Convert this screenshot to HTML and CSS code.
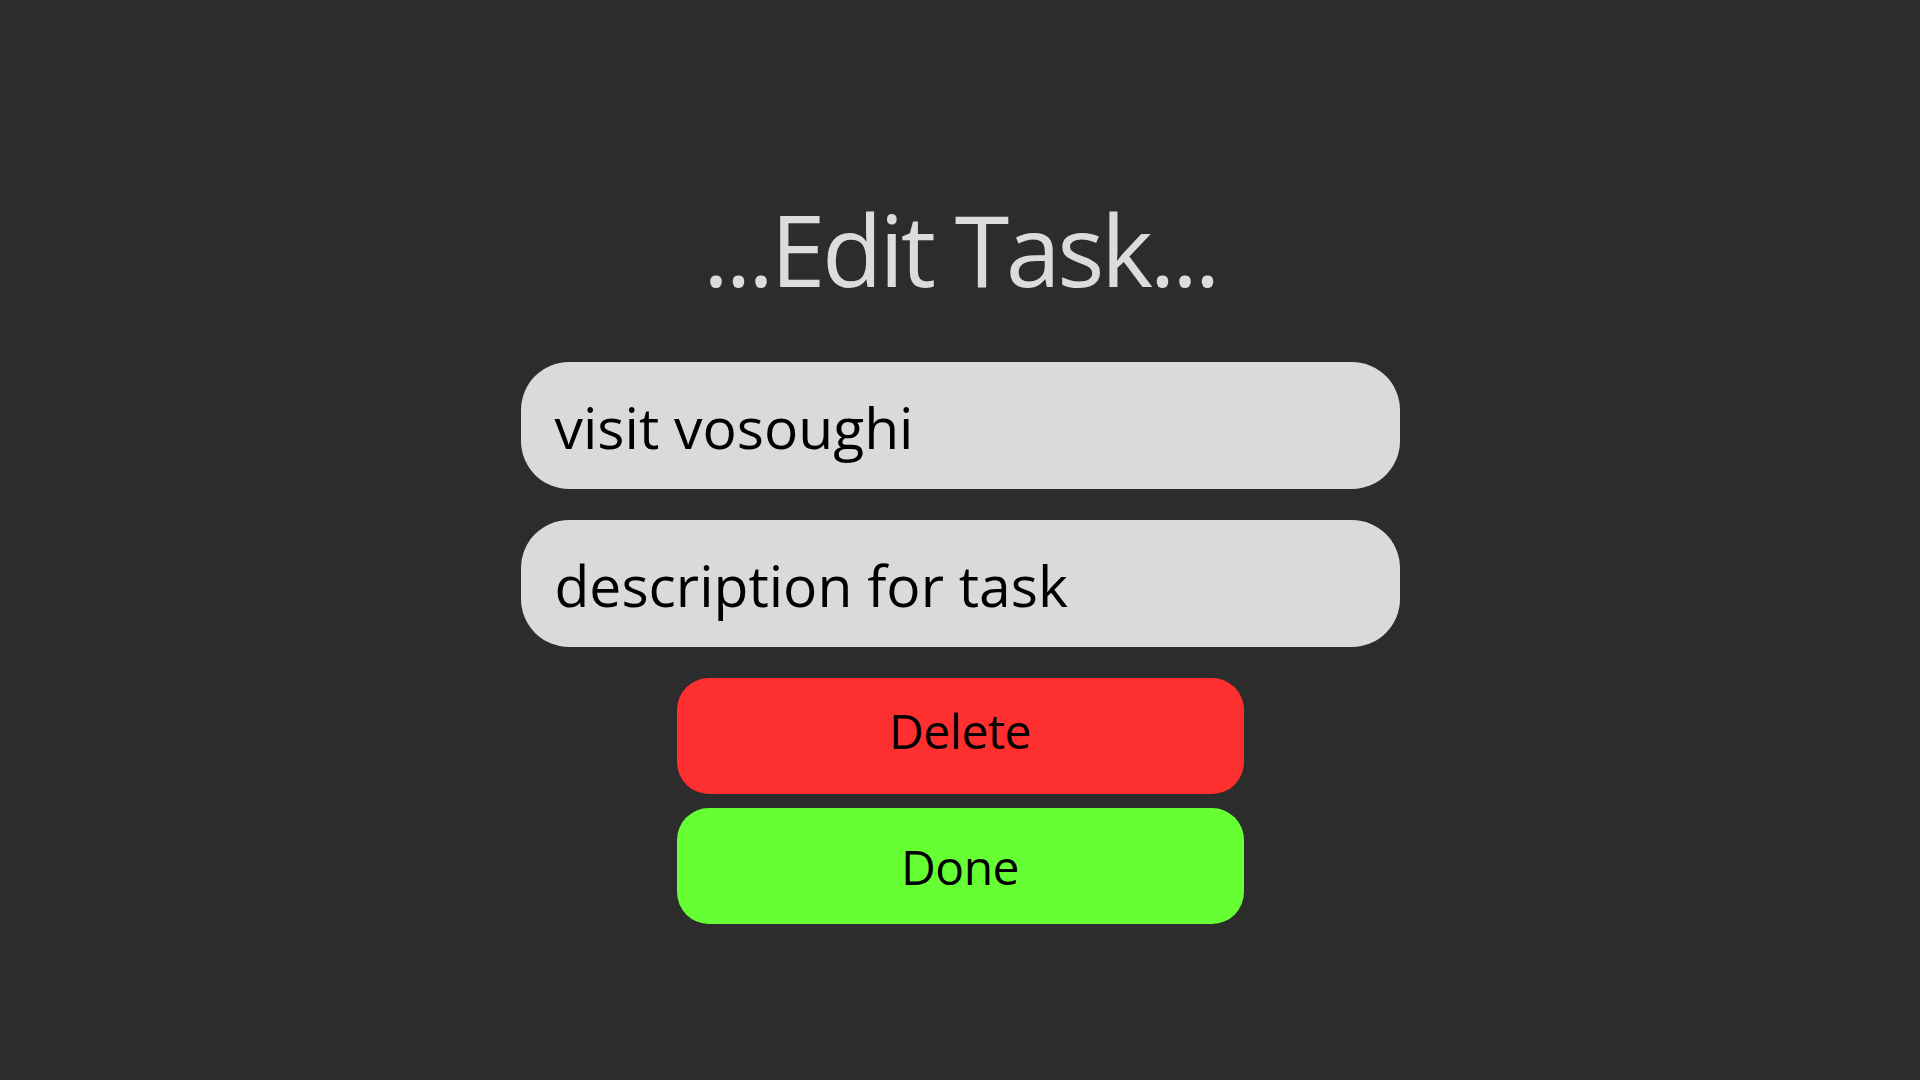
FILE: index.html
```html
<!DOCTYPE html>
<html lang="en">
<head>
<meta charset="utf-8">
<title>Edit Task</title>
<link rel="stylesheet" href="styles.css">
</head>
<body>
<main class="page">
  <h1 class="title">...Edit Task...</h1>
  <div class="field">visit vosoughi</div>
  <div class="field field-second">description for task</div>
  <button class="btn btn-delete">Delete</button>
  <button class="btn btn-done">Done</button>
</main>
</body>
</html>
```
FILE: styles.css
```css
html, body {
  margin: 0;
  padding: 0;
  background: #2c2c2c;
  height: 100%;
}
.page {
  display: flex;
  flex-direction: column;
  align-items: center;
  padding-top: 199px;
  font-family: "Open Sans", "Noto Sans", sans-serif;
}
.title {
  margin: 0;
  font-size: 99px;
  font-weight: 400;
  line-height: 99px;
  color: #dcdcdc;
  letter-spacing: -3.5px;
}
.field {
  box-sizing: border-box;
  width: 879px;
  height: 127px;
  margin-top: 64px;
  border-radius: 48px;
  background: #dadada;
  color: #000;
  font-size: 57px;
  line-height: 123px;
  padding: 4px 0 0 34px;
  letter-spacing: 0;
}
.field-second {
  margin-top: 31px;
}
.btn {
  box-sizing: border-box;
  width: 567px;
  height: 116px;
  border: none;
  border-radius: 32px;
  font-family: "Open Sans", "Noto Sans", sans-serif;
  font-size: 48px;
  color: #000;
  letter-spacing: -0.5px;
}
.btn-delete {
  margin-top: 31px;
  background: #fe2f2f;
  padding: 0 0 11px 0;
  line-height: 105px;
}
.btn-done {
  margin-top: 14px;
  background: #66ff33;
  padding: 2px 0 0 0;
  line-height: 114px;
}
```
